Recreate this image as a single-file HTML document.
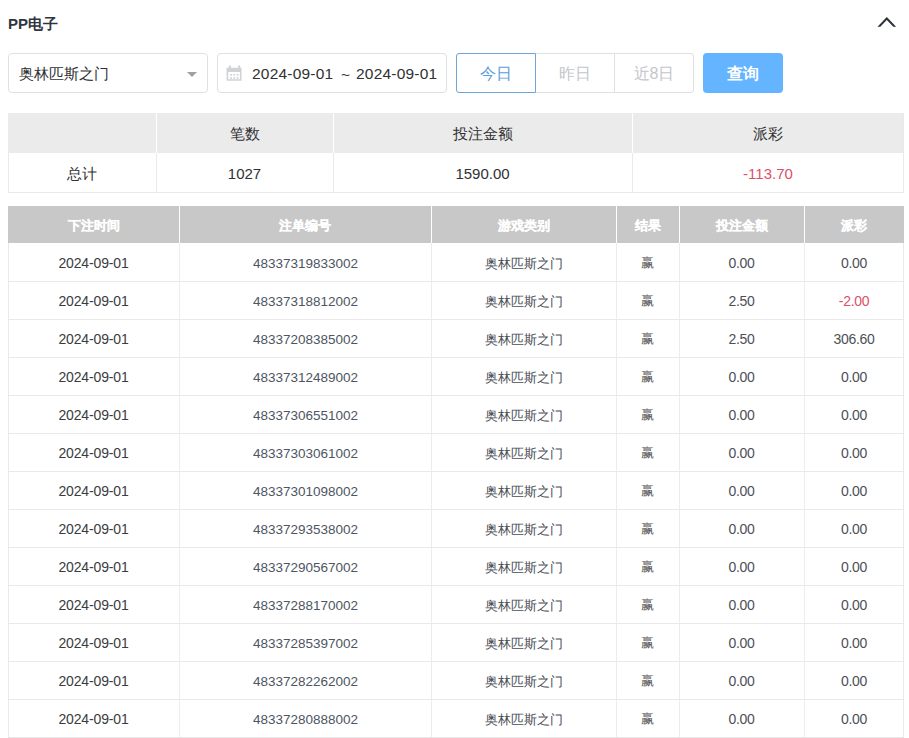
<!DOCTYPE html>
<html><head><meta charset="utf-8"><style>
*{box-sizing:border-box;margin:0;padding:0}
html,body{width:909px;height:738px;overflow:hidden;background:#fff}
body{font-family:"Liberation Sans",sans-serif;color:#333;position:relative}
.a{position:absolute}
.title{left:8px;top:15px;font-size:15px;font-weight:bold;color:#2f3540;line-height:18px;white-space:nowrap}
.chev{left:876px;top:15px}
.sel{left:8px;top:53px;width:200px;height:40px;border:1px solid #e0e0e0;border-radius:4px}
.sel .t{position:absolute;left:10px;top:1px;line-height:38px;font-size:15px;color:#303133;white-space:nowrap}
.tri{left:187px;top:72px}
.dp{left:217px;top:53px;width:230px;height:40px;border:1px solid #e0e0e0;border-radius:4px}
.cal{left:225px;top:64px}
.dpt{top:53.5px;line-height:39px;font-size:15.5px;color:#303133;white-space:nowrap;letter-spacing:0.2px}
.b1,.b2,.b3{top:53px;height:40px;line-height:39px;text-align:center;font-size:16px;border:1px solid #e0e0e0;color:#c4c6ca}
.b1{left:456px;width:80px;border-color:#6fa4d8;color:#5c9edc;border-radius:3px 0 0 3px}
.b2{left:536px;width:79px;border-left:none}
.b3{left:615px;width:79px;border-left:none;border-radius:0 4px 4px 0}
.q{left:703px;top:53px;width:80px;height:40px;background:#64b4ff;border-radius:4px;color:#fff;text-align:center;line-height:40px;font-size:15.5px;font-weight:bold;padding-top:1px}
.c{text-align:center;white-space:nowrap}
.sh{height:40px;line-height:42px;font-size:15px;color:#303133}
.sb{height:40px;line-height:41px;font-size:15px;color:#303133}
.dh{height:37px;line-height:39px;font-size:13px;font-weight:bold;color:#fff;-webkit-text-stroke:0.2px #fff}
.d,.n,.g,.w,.m{height:38px;line-height:39px;font-size:13.5px}
.d{color:#3a3c40;font-size:14px;letter-spacing:-0.15px;line-height:40px}
.n{color:#4e5562;line-height:41px;padding-left:1px}
.g{color:#4a4e55;font-size:12.5px;letter-spacing:0.1px;line-height:42.5px;padding-left:1.5px}
.w{color:#555;font-size:13px;line-height:40px}
.m{color:#4c5058;font-size:14px;letter-spacing:-0.3px;line-height:40px}
.red{color:#dc5068 !important}
</style></head><body>
<div class="a title">PP电子</div>
<svg class="a chev" width="22" height="14" viewBox="0 0 22 14"><path d="M10.8 2.1 L20.1 11.75 L17.3 11.75 L10.8 5.0 L4.3 11.75 L1.5 11.75 Z" fill="#2d313a"/></svg>
<div class="a sel"><span class="t">奥林匹斯之门</span></div><svg class="a tri" width="10" height="6" viewBox="0 0 10 6"><path d="M0 0H10L5 5Z" fill="#a0a0a0"/></svg>
<div class="a dp"></div><svg class="a cal" width="18" height="18" viewBox="0 0 18 18" fill="#d0d2d6"><path fill-rule="evenodd" d="M1.6 3.7H16.5V16.8H1.6Z M3.2 8.1V15.2H14.9V8.1Z"/><rect x="3.9" y="1.2" width="2" height="3.4" rx="0.9"/><rect x="13.2" y="1.2" width="2" height="3.4" rx="0.9"/><rect x="5.2" y="9.95" width="1.7" height="1.7"/><rect x="8.3" y="9.95" width="1.7" height="1.7"/><rect x="11.65" y="9.95" width="1.7" height="1.7"/><rect x="5.2" y="13.1" width="1.7" height="1.7"/><rect x="8.3" y="13.1" width="1.7" height="1.7"/><rect x="11.65" y="13.1" width="1.7" height="1.7"/></svg>
<div class="a dpt" style="left:252px">2024-09-01</div><div class="a dpt" style="left:341px;top:54.5px">~</div><div class="a dpt" style="left:356px">2024-09-01</div>
<div class="a b1">今日</div><div class="a b2">昨日</div><div class="a b3">近8日</div>
<div class="a q">查询</div>
<div class="a" style="left:8px;top:113px;width:896px;height:40px;background:#ebebeb"></div>
<div class="a" style="left:156px;top:113px;width:1px;height:40px;background:#fff"></div><div class="a" style="left:333px;top:113px;width:1px;height:40px;background:#fff"></div><div class="a" style="left:632px;top:113px;width:1px;height:40px;background:#fff"></div>
<div class="a" style="left:8px;top:153px;width:1px;height:40px;background:#e9e9e9"></div><div class="a" style="left:903px;top:113px;width:1px;height:80px;background:#e9e9e9"></div><div class="a" style="left:8px;top:192px;width:896px;height:1px;background:#e9e9e9"></div><div class="a" style="left:156px;top:153px;width:1px;height:40px;background:#e9e9e9"></div><div class="a" style="left:333px;top:153px;width:1px;height:40px;background:#e9e9e9"></div><div class="a" style="left:632px;top:153px;width:1px;height:40px;background:#e9e9e9"></div>
<div class="a c sb" style="left:8px;top:153px;width:148px">总计</div><div class="a c sh" style="left:156px;top:113px;width:177px">笔数</div><div class="a c sb" style="left:156px;top:153px;width:177px">1027</div><div class="a c sh" style="left:333px;top:113px;width:299px">投注金额</div><div class="a c sb" style="left:333px;top:153px;width:299px">1590.00</div><div class="a c sh" style="left:632px;top:113px;width:272px">派彩</div><div class="a c sb red" style="left:632px;top:153px;width:272px">-113.70</div>
<div class="a" style="left:8px;top:206px;width:896px;height:37px;background:#c8c8c8"></div>
<div class="a" style="left:179px;top:206px;width:1px;height:37px;background:#fff"></div><div class="a" style="left:431px;top:206px;width:1px;height:37px;background:#fff"></div><div class="a" style="left:616px;top:206px;width:1px;height:37px;background:#fff"></div><div class="a" style="left:679px;top:206px;width:1px;height:37px;background:#fff"></div><div class="a" style="left:804px;top:206px;width:1px;height:37px;background:#fff"></div><div class="a c dh" style="left:8px;top:206px;width:171px">下注时间</div><div class="a c dh" style="left:179px;top:206px;width:252px">注单编号</div><div class="a c dh" style="left:431px;top:206px;width:185px">游戏类别</div><div class="a c dh" style="left:616px;top:206px;width:63px">结果</div><div class="a c dh" style="left:679px;top:206px;width:125px">投注金额</div><div class="a c dh" style="left:804px;top:206px;width:100px">派彩</div>
<div class="a" style="left:8px;top:243px;width:1px;height:494px;background:#e9e9e9"></div><div class="a" style="left:903px;top:243px;width:1px;height:494px;background:#e9e9e9"></div><div class="a" style="left:179px;top:243px;width:1px;height:494px;background:#ececec"></div><div class="a" style="left:431px;top:243px;width:1px;height:494px;background:#ececec"></div><div class="a" style="left:616px;top:243px;width:1px;height:494px;background:#ececec"></div><div class="a" style="left:679px;top:243px;width:1px;height:494px;background:#ececec"></div><div class="a" style="left:804px;top:243px;width:1px;height:494px;background:#ececec"></div><div class="a" style="left:8px;top:281px;width:896px;height:1px;background:#e9e9e9"></div><div class="a" style="left:8px;top:319px;width:896px;height:1px;background:#e9e9e9"></div><div class="a" style="left:8px;top:357px;width:896px;height:1px;background:#e9e9e9"></div><div class="a" style="left:8px;top:395px;width:896px;height:1px;background:#e9e9e9"></div><div class="a" style="left:8px;top:433px;width:896px;height:1px;background:#e9e9e9"></div><div class="a" style="left:8px;top:471px;width:896px;height:1px;background:#e9e9e9"></div><div class="a" style="left:8px;top:509px;width:896px;height:1px;background:#e9e9e9"></div><div class="a" style="left:8px;top:547px;width:896px;height:1px;background:#e9e9e9"></div><div class="a" style="left:8px;top:585px;width:896px;height:1px;background:#e9e9e9"></div><div class="a" style="left:8px;top:623px;width:896px;height:1px;background:#e9e9e9"></div><div class="a" style="left:8px;top:661px;width:896px;height:1px;background:#e9e9e9"></div><div class="a" style="left:8px;top:699px;width:896px;height:1px;background:#e9e9e9"></div><div class="a" style="left:8px;top:737px;width:896px;height:1px;background:#e9e9e9"></div>
<div class="a c d" style="left:8px;top:243px;width:171px">2024-09-01</div><div class="a c n" style="left:179px;top:243px;width:252px">48337319833002</div><div class="a c g" style="left:431px;top:243px;width:185px">奥林匹斯之门</div><div class="a c w" style="left:616px;top:243px;width:63px">赢</div><div class="a c m" style="left:679px;top:243px;width:125px">0.00</div><div class="a c m" style="left:804px;top:243px;width:100px">0.00</div>
<div class="a c d" style="left:8px;top:281px;width:171px">2024-09-01</div><div class="a c n" style="left:179px;top:281px;width:252px">48337318812002</div><div class="a c g" style="left:431px;top:281px;width:185px">奥林匹斯之门</div><div class="a c w" style="left:616px;top:281px;width:63px">赢</div><div class="a c m" style="left:679px;top:281px;width:125px">2.50</div><div class="a c m red" style="left:804px;top:281px;width:100px">-2.00</div>
<div class="a c d" style="left:8px;top:319px;width:171px">2024-09-01</div><div class="a c n" style="left:179px;top:319px;width:252px">48337208385002</div><div class="a c g" style="left:431px;top:319px;width:185px">奥林匹斯之门</div><div class="a c w" style="left:616px;top:319px;width:63px">赢</div><div class="a c m" style="left:679px;top:319px;width:125px">2.50</div><div class="a c m" style="left:804px;top:319px;width:100px">306.60</div>
<div class="a c d" style="left:8px;top:357px;width:171px">2024-09-01</div><div class="a c n" style="left:179px;top:357px;width:252px">48337312489002</div><div class="a c g" style="left:431px;top:357px;width:185px">奥林匹斯之门</div><div class="a c w" style="left:616px;top:357px;width:63px">赢</div><div class="a c m" style="left:679px;top:357px;width:125px">0.00</div><div class="a c m" style="left:804px;top:357px;width:100px">0.00</div>
<div class="a c d" style="left:8px;top:395px;width:171px">2024-09-01</div><div class="a c n" style="left:179px;top:395px;width:252px">48337306551002</div><div class="a c g" style="left:431px;top:395px;width:185px">奥林匹斯之门</div><div class="a c w" style="left:616px;top:395px;width:63px">赢</div><div class="a c m" style="left:679px;top:395px;width:125px">0.00</div><div class="a c m" style="left:804px;top:395px;width:100px">0.00</div>
<div class="a c d" style="left:8px;top:433px;width:171px">2024-09-01</div><div class="a c n" style="left:179px;top:433px;width:252px">48337303061002</div><div class="a c g" style="left:431px;top:433px;width:185px">奥林匹斯之门</div><div class="a c w" style="left:616px;top:433px;width:63px">赢</div><div class="a c m" style="left:679px;top:433px;width:125px">0.00</div><div class="a c m" style="left:804px;top:433px;width:100px">0.00</div>
<div class="a c d" style="left:8px;top:471px;width:171px">2024-09-01</div><div class="a c n" style="left:179px;top:471px;width:252px">48337301098002</div><div class="a c g" style="left:431px;top:471px;width:185px">奥林匹斯之门</div><div class="a c w" style="left:616px;top:471px;width:63px">赢</div><div class="a c m" style="left:679px;top:471px;width:125px">0.00</div><div class="a c m" style="left:804px;top:471px;width:100px">0.00</div>
<div class="a c d" style="left:8px;top:509px;width:171px">2024-09-01</div><div class="a c n" style="left:179px;top:509px;width:252px">48337293538002</div><div class="a c g" style="left:431px;top:509px;width:185px">奥林匹斯之门</div><div class="a c w" style="left:616px;top:509px;width:63px">赢</div><div class="a c m" style="left:679px;top:509px;width:125px">0.00</div><div class="a c m" style="left:804px;top:509px;width:100px">0.00</div>
<div class="a c d" style="left:8px;top:547px;width:171px">2024-09-01</div><div class="a c n" style="left:179px;top:547px;width:252px">48337290567002</div><div class="a c g" style="left:431px;top:547px;width:185px">奥林匹斯之门</div><div class="a c w" style="left:616px;top:547px;width:63px">赢</div><div class="a c m" style="left:679px;top:547px;width:125px">0.00</div><div class="a c m" style="left:804px;top:547px;width:100px">0.00</div>
<div class="a c d" style="left:8px;top:585px;width:171px">2024-09-01</div><div class="a c n" style="left:179px;top:585px;width:252px">48337288170002</div><div class="a c g" style="left:431px;top:585px;width:185px">奥林匹斯之门</div><div class="a c w" style="left:616px;top:585px;width:63px">赢</div><div class="a c m" style="left:679px;top:585px;width:125px">0.00</div><div class="a c m" style="left:804px;top:585px;width:100px">0.00</div>
<div class="a c d" style="left:8px;top:623px;width:171px">2024-09-01</div><div class="a c n" style="left:179px;top:623px;width:252px">48337285397002</div><div class="a c g" style="left:431px;top:623px;width:185px">奥林匹斯之门</div><div class="a c w" style="left:616px;top:623px;width:63px">赢</div><div class="a c m" style="left:679px;top:623px;width:125px">0.00</div><div class="a c m" style="left:804px;top:623px;width:100px">0.00</div>
<div class="a c d" style="left:8px;top:661px;width:171px">2024-09-01</div><div class="a c n" style="left:179px;top:661px;width:252px">48337282262002</div><div class="a c g" style="left:431px;top:661px;width:185px">奥林匹斯之门</div><div class="a c w" style="left:616px;top:661px;width:63px">赢</div><div class="a c m" style="left:679px;top:661px;width:125px">0.00</div><div class="a c m" style="left:804px;top:661px;width:100px">0.00</div>
<div class="a c d" style="left:8px;top:699px;width:171px">2024-09-01</div><div class="a c n" style="left:179px;top:699px;width:252px">48337280888002</div><div class="a c g" style="left:431px;top:699px;width:185px">奥林匹斯之门</div><div class="a c w" style="left:616px;top:699px;width:63px">赢</div><div class="a c m" style="left:679px;top:699px;width:125px">0.00</div><div class="a c m" style="left:804px;top:699px;width:100px">0.00</div>
</body></html>
